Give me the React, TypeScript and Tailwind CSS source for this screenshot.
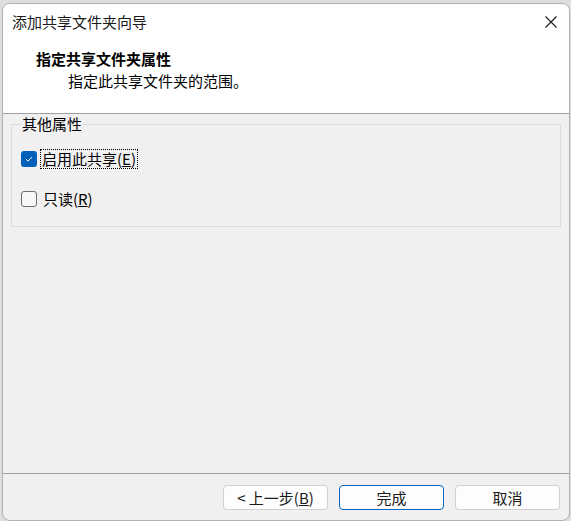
import React from 'react';

const font = "font-['Noto_Sans_CJK_SC','Noto_Sans',sans-serif]";

function CloseIcon() {
  return (
    <svg width="12" height="12" viewBox="0 0 12 12" className="block">
      <path d="M0.5 0.5 L11.5 11.5 M11.5 0.5 L0.5 11.5" stroke="#1a1a1a" strokeWidth="1.1" fill="none" />
    </svg>
  );
}

function Checkbox({ checked }: { checked: boolean }) {
  if (checked) {
    return (
      <span className="flex h-4 w-4 shrink-0 items-center justify-center rounded-[3px] bg-[#005fb8]">
        <svg width="10" height="10" viewBox="0 0 10 10">
          <path d="M2.2 5.3 L4.1 7.1 L7.9 3.1" stroke="#ffffff" strokeWidth="1" fill="none" />
        </svg>
      </span>
    );
  }
  return <span className="h-4 w-4 shrink-0 rounded-[3px] border border-[#6e6e6e] bg-[#f7f7f7]" />;
}

function Button({ children, primary }: { children: React.ReactNode; primary?: boolean }) {
  return (
    <button
      className={
        primary
          ? 'flex h-[25px] w-[105px] items-center justify-center rounded-[4px] border border-[#0067c0] bg-[#fdfdfd] text-[15px] leading-[20px] text-[#1a1a1a]'
          : 'flex h-[25px] w-[105px] items-center justify-center rounded-[4px] border border-[#d0d0d0] bg-[#fdfdfd] text-[15px] leading-[20px] text-[#1a1a1a]'
      }
    >
      {children}
    </button>
  );
}

export default function App() {
  return (
    <div className={`h-[521px] w-[571px] bg-[#dedede] pl-[2px] pt-[3px] ${font}`}>
      <div className="flex h-[518px] w-[568px] flex-col overflow-hidden rounded-[8px] border border-[#b0b0b0] bg-[#f0f0f0] text-[#000000]">
        {/* ── Header ── */}
        <div className="border-b border-[#a0a0a0] bg-white">
          <div className="flex h-[35px] items-center justify-between pl-[9px] pr-[12px]">
            <span className="text-[15px] leading-[20px] text-[#1a1a1a]">添加共享文件夹向导</span>
            <CloseIcon />
          </div>
          <div className="pb-[22px] pl-[33px] pt-[10px]">
            <div className="text-[15px] font-bold leading-[20px]">指定共享文件夹属性</div>
            <div className="mt-[2px] pl-[32px] text-[15px] leading-[20px]">指定此共享文件夹的范围。</div>
          </div>
        </div>

        {/* ── Body ── */}
        <div className="flex-1 px-[8px]">
          <fieldset className="border border-[#dcdcdc] pb-[17px] pl-[9px] pr-[8px]">
            <legend className="px-[1px] text-[15px] leading-[20px]">其他属性</legend>
            <div className="mt-[15px] flex h-[20px] items-center gap-[3px]">
              <Checkbox checked />
              <span className="border border-dotted border-[#000000] px-[1px] text-[15px] leading-[18px]">
                启用此共享(<span className="underline">E</span>)
              </span>
            </div>
            <div className="mt-[20px] flex h-[20px] items-center gap-[6px]">
              <Checkbox checked={false} />
              <span className="text-[15px] leading-[20px]">
                只读(<span className="underline">R</span>)
              </span>
            </div>
          </fieldset>
        </div>

        {/* ── Footer ── */}
        <div className="flex justify-end gap-[11px] border-t border-[#a0a0a0] pb-[10px] pr-[9px] pt-[11px]">
          <Button>
            &lt; 上一步(<span className="underline">B</span>)
          </Button>
          <Button primary>完成</Button>
          <Button>取消</Button>
        </div>
      </div>
    </div>
  );
}
